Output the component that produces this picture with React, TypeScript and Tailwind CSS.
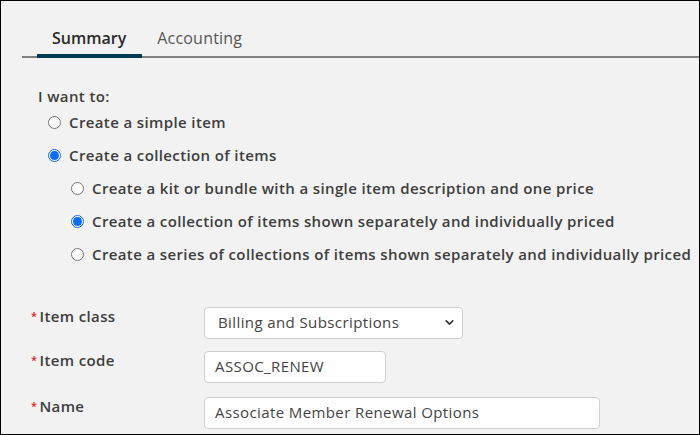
import { ChevronDown } from "lucide-react";

const font = { fontFamily: '"Open Sans", "Liberation Sans", sans-serif' };

function Radio({ checked }: { checked?: boolean }) {
  return checked ? (
    <span className="flex h-[13px] w-[13px] shrink-0 items-center justify-center rounded-full border border-[#0b6cf5] bg-white">
      <span className="h-[9px] w-[9px] rounded-full bg-[#0b6cf5]" />
    </span>
  ) : (
    <span className="h-[13px] w-[13px] shrink-0 rounded-full border border-[#767676] bg-white" />
  );
}

function Option({ label, checked }: { label: string; checked?: boolean }) {
  return (
    <label className="flex h-[33px] items-center gap-[8px] text-[15px] font-semibold tracking-[0.38px] text-[#3d3d3d]">
      <Radio checked={checked} />
      {label}
    </label>
  );
}

function Field({ label, className, children }: { label: string; className?: string; children: React.ReactNode }) {
  return (
    <div className={`flex items-start ${className ?? ""}`}>
      <div className="-mt-[2px] flex w-[173px] items-center text-[15px] font-semibold tracking-[0.38px] text-[#3d3d3d]">
        <span className="mr-[2px] text-[11px] leading-none text-[#e0201e]">*</span>
        {label}
      </div>
      {children}
    </div>
  );
}

export default function App() {
  return (
    <div className="h-[435px] w-[700px] overflow-hidden border border-black bg-[#f2f2f2]" style={font}>
      {/* Tabs */}
      <div className="ml-[21px] mt-[25px] flex border-b-2 border-[#808080]">
        <div className="-mb-[2px] ml-[15px] border-b-4 border-[#003b4f] pl-[15px] pr-[16px] pb-[4px] text-[16px] font-semibold text-[#2b2b2b]">
          Summary
        </div>
        <div className="px-[15px] pb-[4px] text-[16px] tracking-[0.2px] text-[#555]">Accounting</div>
      </div>

      {/* Item type */}
      <div className="pl-[37px] pt-[27px]">
        <div className="text-[15px] font-semibold tracking-[0.38px] text-[#3d3d3d]">I want to:</div>
        <div className="-mt-[2px] pl-[10px]">
          <Option label="Create a simple item" />
          <Option label="Create a collection of items" checked />
          <div className="pl-[23px]">
            <Option label="Create a kit or bundle with a single item description and one price" />
            <Option label="Create a collection of items shown separately and individually priced" checked />
            <Option label="Create a series of collections of items shown separately and individually priced" />
          </div>
        </div>
      </div>

      {/* Item fields */}
      <div className="mt-[36px] flex flex-col gap-[12px] pl-[30px]">
        <Field label="Item class">
          <div className="flex h-[32px] w-[259px] items-center justify-between rounded-[4px] border border-[#cfcfcf] bg-white pl-[13px] pr-[6px] text-[15px] tracking-[0.4px] text-[#444]">
            Billing and Subscriptions
            <ChevronDown size={13} strokeWidth={3} className="text-[#333]" />
          </div>
        </Field>
        <Field label="Item code">
          <div className="flex h-[32px] w-[182px] items-center rounded-[4px] border border-[#cfcfcf] bg-white pl-[10px] text-[15px] tracking-[0.4px] text-[#444]">
            ASSOC_RENEW
          </div>
        </Field>
        <Field label="Name" className="mt-[2px]">
          <div className="flex h-[32px] w-[396px] items-center rounded-[4px] border border-[#cfcfcf] bg-white pl-[10px] text-[15px] tracking-[0.4px] text-[#444]">
            Associate Member Renewal Options
          </div>
        </Field>
      </div>
    </div>
  );
}
